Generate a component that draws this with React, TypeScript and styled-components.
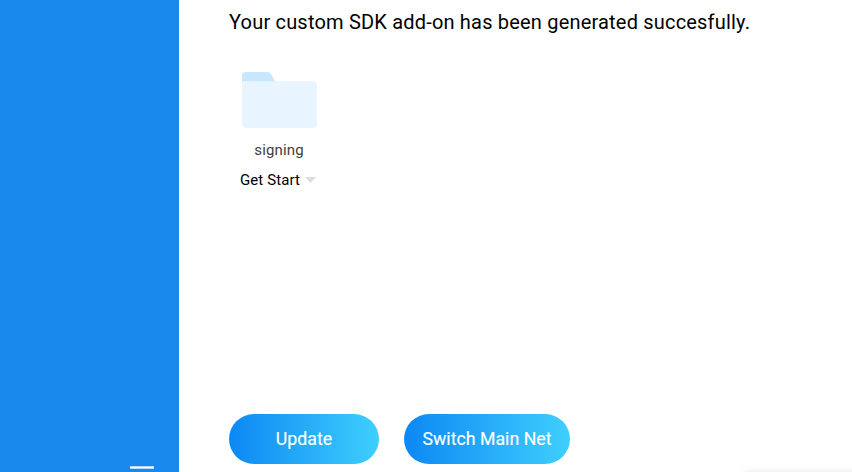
import React from "react";
import styled, { createGlobalStyle } from "styled-components";

const GlobalStyle = createGlobalStyle`
  * { box-sizing: border-box; }
  body { margin: 0; background: #fff; font-family: Roboto, sans-serif; overflow: hidden; }
`;

const Page = styled.div`
  display: flex;
  width: 852px;
  height: 472px;
  overflow: hidden;
`;

const Sidebar = styled.aside`
  flex: none;
  display: flex;
  flex-direction: column;
  justify-content: flex-end;
  align-items: flex-end;
  width: 179px;
  padding: 0 25px 3px 0;
  background: #1888ec;
`;

const MenuLine = styled.span`
  width: 24px;
  height: 3px;
  border: solid rgba(255, 255, 255, 0.7);
  border-width: 1px 1px 1px 0;
  background: #fff;
  background-clip: padding-box;
`;

const Main = styled.main`
  position: relative;
  flex: 1;
  display: flex;
  flex-direction: column;
  padding: 8px 0 8px 50px;
`;

const Heading = styled.h1`
  margin: 0;
  font-size: 20px;
  font-weight: 400;
  line-height: 28px;
  letter-spacing: 0.19px;
  white-space: nowrap;
  color: #000;
`;

const FolderItem = styled.section`
  display: flex;
  flex-direction: column;
  align-items: center;
  width: 100px;
  margin-top: 36px;
`;

const FolderIcon = styled.svg`
  display: block;
  width: 75px;
  height: 56px;
`;

const FolderName = styled.span`
  margin-top: 12px;
  font-size: 15px;
  line-height: 20px;
  letter-spacing: 0.15px;
  color: #404040;
`;

const StartMenu = styled.button`
  display: flex;
  align-items: center;
  gap: 5px;
  margin-top: 10px;
  margin-left: -2px;
  padding: 0;
  border: 0;
  background: none;
  font: 15px/20px Roboto, sans-serif;
  letter-spacing: 0.1px;
  white-space: nowrap;
  color: #000;
`;

const Caret = styled.svg`
  width: 11px;
  height: 6px;
  margin-bottom: 1px;
`;

const Actions = styled.footer`
  display: flex;
  gap: 25px;
  margin-top: auto;
`;

const PillButton = styled.button<{ $width: number }>`
  width: ${(p) => p.$width}px;
  height: 50px;
  padding: 0;
  border: 0;
  border-radius: 25px;
  background: linear-gradient(90deg, #0c88f4, #3fcffd);
  font: 400 17.75px/50px Roboto, sans-serif;
  -webkit-text-stroke: 0.15px #fff;
  white-space: nowrap;
  color: #fff;
`;

const CornerShadow = styled.div`
  position: absolute;
  right: -20px;
  bottom: -11px;
  width: 126px;
  height: 10px;
  box-shadow: 0 0 10px rgba(0, 0, 0, 0.13);
`;

export default function App() {
  return (
    <Page>
      <GlobalStyle />
      <Sidebar>
        <MenuLine />
      </Sidebar>
      <Main>
        <Heading>Your custom SDK add-on has been generated succesfully.</Heading>
        <FolderItem>
          <FolderIcon viewBox="0 0 75 56">
            <path d="M0 20V4Q0 0 4 0H25Q28 0 29.5 2.5L38 20Z" fill="#c9e6ff" />
            <rect y="9.3" width="75" height="46.7" rx="4" fill="#e8f5ff" />
            <path d="M0 9.3H8V18H0Z" fill="#e8f5ff" />
          </FolderIcon>
          <FolderName>signing</FolderName>
          <StartMenu>
            Get Start
            <Caret viewBox="0 0 11 6">
              <path d="M0 0H11L5.5 6Z" fill="#ddd" />
            </Caret>
          </StartMenu>
        </FolderItem>
        <Actions>
          <PillButton $width={150}>Update</PillButton>
          <PillButton $width={166}>Switch Main Net</PillButton>
        </Actions>
        <CornerShadow />
      </Main>
    </Page>
  );
}
